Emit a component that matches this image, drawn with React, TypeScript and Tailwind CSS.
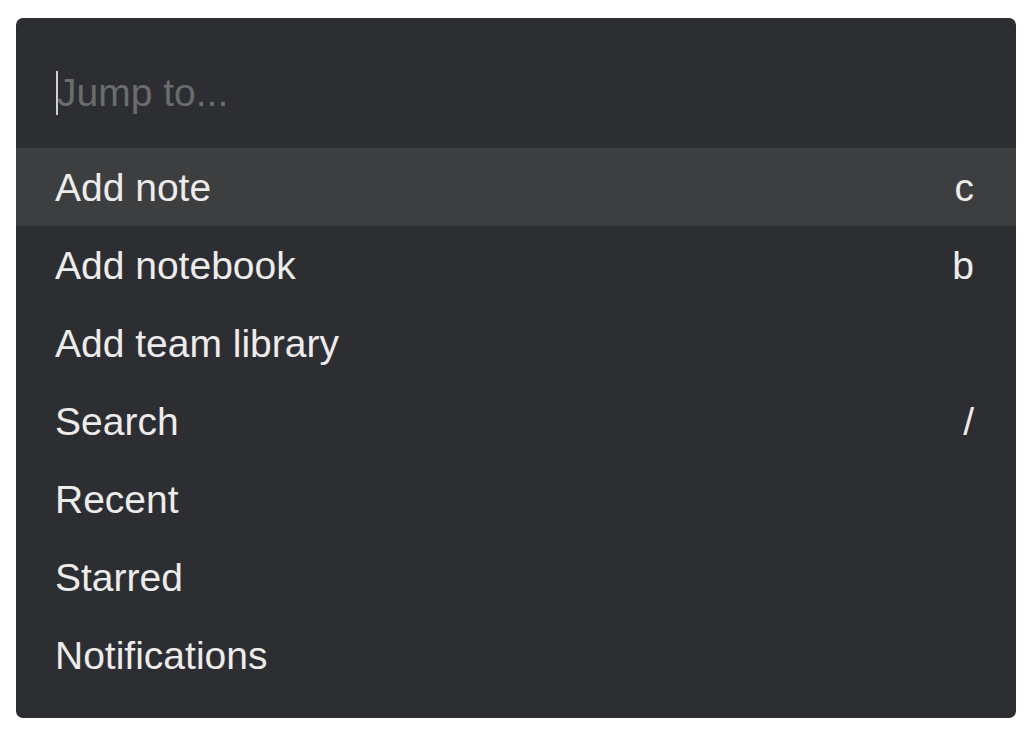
import React from "react";

const items: { label: string; key?: string; active?: boolean }[] = [
  { label: "Add note", key: "c", active: true },
  { label: "Add notebook", key: "b" },
  { label: "Add team library" },
  { label: "Search", key: "/" },
  { label: "Recent" },
  { label: "Starred" },
  { label: "Notifications" },
];

export default function App() {
  return (
    <div
      className="min-h-screen w-full bg-white pt-[18px] pl-[16px]"
      style={{ fontFamily: '"Liberation Sans", Arial, sans-serif' }}
    >
      <div className="w-[1000px] h-[700px] rounded-[7px] bg-[#2d2e31] overflow-hidden flex flex-col">
        <div className="h-[130px] flex items-center pl-[40px] pt-[18px] shrink-0">
          <div className="relative flex items-center">
            <span className="absolute left-0 top-[-2px] w-[2px] h-[44px] bg-[#d0d0d0]" />
            <span className="text-[39px] leading-none text-[#6b6c6e] pl-[1px]">Jump to...</span>
          </div>
        </div>
        {items.map((it) => (
          <div
            key={it.label}
            className={
              "h-[78px] shrink-0 flex items-center justify-between pl-[39px] pr-[42px] text-[39px] leading-none text-[#ececec] " +
              (it.active ? "bg-[#3d3e40]" : "")
            }
          >
            <span>{it.label}</span>
            {it.key && <span>{it.key}</span>}
          </div>
        ))}
      </div>
    </div>
  );
}
